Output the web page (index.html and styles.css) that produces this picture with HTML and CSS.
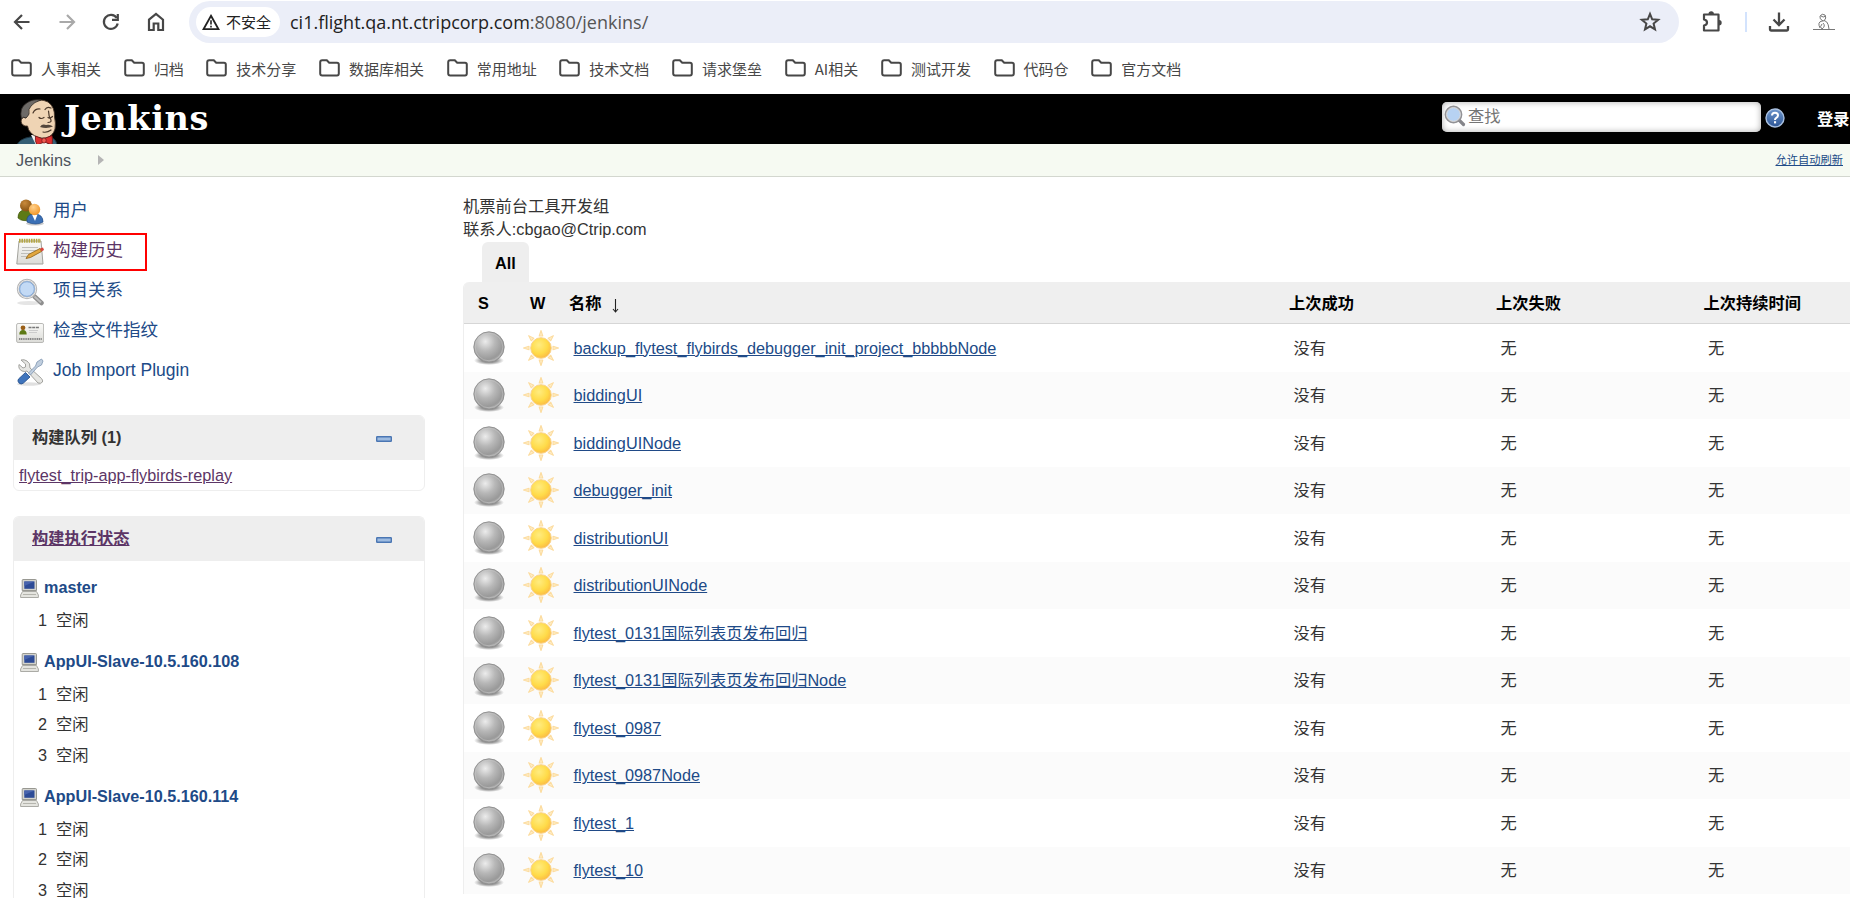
FILE: index.html
```html
<!DOCTYPE html>
<html lang="zh-CN">
<head>
<meta charset="utf-8">
<title>Jenkins</title>
<link rel="stylesheet" href="styles.css">
</head>
<body>
<svg class="defs" width="0" height="0">
  <defs>
    <radialGradient id="gBall" cx="0.38" cy="0.32" r="0.7"><stop offset="0" stop-color="#ececec"/><stop offset="0.45" stop-color="#b8b8b8"/><stop offset="0.85" stop-color="#999"/><stop offset="1" stop-color="#adadad"/></radialGradient>
    <radialGradient id="gShade"><stop offset="0.5" stop-color="#000" stop-opacity=".4"/><stop offset="1" stop-color="#000" stop-opacity="0"/></radialGradient>
    <radialGradient id="gSun" cx="0.4" cy="0.35" r="0.7"><stop offset="0" stop-color="#ffec80"/><stop offset="0.6" stop-color="#ffdb49"/><stop offset="1" stop-color="#fbb743"/></radialGradient>
    <radialGradient id="gHeadB" cx="0.4" cy="0.3" r="0.8"><stop offset="0" stop-color="#c98a3c"/><stop offset="1" stop-color="#7d4a0c"/></radialGradient>
    <radialGradient id="gHeadO" cx="0.4" cy="0.3" r="0.8"><stop offset="0" stop-color="#ffd08a"/><stop offset="1" stop-color="#ef8f1c"/></radialGradient>
    <linearGradient id="gPaper" x1="0" y1="0" x2="0" y2="1"><stop offset="0" stop-color="#fafaf8"/><stop offset="1" stop-color="#dcdcd8"/></linearGradient>
    <linearGradient id="gHelp" x1="0" y1="0" x2="0" y2="1"><stop offset="0" stop-color="#6d95cb"/><stop offset="1" stop-color="#2c5596"/></linearGradient>
    <symbol id="folder" viewBox="0 0 21 18"><path d="M1.2 3.2Q1.2 1.2 3.2 1.2H7.8L10.2 3.8H18Q19.8 3.8 19.8 5.6V14.6Q19.8 16.5 18 16.5H3.2Q1.2 16.5 1.2 14.6Z" fill="none" stroke="#474747" stroke-width="2"/></symbol>
    <symbol id="ball" viewBox="0 0 34 36"><ellipse cx="17" cy="30.500" rx="15" ry="4.500" fill="url(#gShade)"/><circle cx="17" cy="17" r="15.200" fill="url(#gBall)" stroke="#8d8d8d" stroke-width=".9"/><circle cx="17" cy="17" r="13.800" fill="none" stroke="#ccc" stroke-opacity=".5" stroke-width=".9"/></symbol>
    <symbol id="sun" viewBox="0 0 38 38">
      <g fill="#ffedc4" stroke="#fcdca0" stroke-width="1.100" stroke-linejoin="round">
        <path id="ray" d="M17.200 7L19 1.500L20.800 7Z"/>
        <use href="#ray" transform="rotate(45 19 19)"/><use href="#ray" transform="rotate(90 19 19)"/><use href="#ray" transform="rotate(135 19 19)"/><use href="#ray" transform="rotate(180 19 19)"/><use href="#ray" transform="rotate(225 19 19)"/><use href="#ray" transform="rotate(270 19 19)"/><use href="#ray" transform="rotate(315 19 19)"/>
      </g>
      <circle cx="19" cy="19" r="10.300" fill="url(#gSun)" stroke="#fad38a" stroke-width="1"/></symbol>
    <symbol id="pc" viewBox="0 0 19 19"><path d="M3 .5H15.500Q16.500.5 16.500 1.500V11.500H2.200V1.500Q2.200.5 3 .5Z" fill="#d3d3cd" stroke="#8e8e88" stroke-width=".9"/><rect x="4.300" y="2.500" width="10.200" height="7.300" fill="#2d4b96"/><path d="M4.300 2.500H14.500L4.300 7Z" fill="#4763ad"/><path d="M2.500 12.500H16.500L18.400 16V18.500H.6V16Z" fill="#e4e4df" stroke="#a3a39d" stroke-width=".9"/><path d="M3 15.500H16" stroke="#b5b5ae"/></symbol>
    <symbol id="minus" viewBox="0 0 16 6"><rect x=".7" y=".7" width="14.600" height="4.600" rx=".5" fill="#9dbbe0" stroke="#4a76b3" stroke-width="1.400"/></symbol>
  </defs>
</svg>

<header class="chrome">
  <div class="toolbar">
    <div class="nav">
      <svg width="22" height="22" viewBox="0 0 22 22"><path d="M18.500 11H4.500M11 4L4 11L11 18" fill="none" stroke="#474747" stroke-width="2.200"/></svg>
      <svg width="22" height="22" viewBox="0 0 22 22"><path d="M3.500 11H17.500M11 4L18 11L11 18" fill="none" stroke="#a9a9a9" stroke-width="2.200"/></svg>
      <svg width="22" height="22" viewBox="0 0 22 22"><path d="M16.700 7A7 7 0 1 0 17.700 12.500" fill="none" stroke="#474747" stroke-width="2.200"/><path d="M17.800 3V8.800H12" fill="none" stroke="#474747" stroke-width="2.200"/></svg>
      <svg width="22" height="22" viewBox="0 0 22 22"><path d="M4 8.700L11 3L18 8.700V19H13.300V12.500H8.700V19H4Z" fill="none" stroke="#474747" stroke-width="2.200"/></svg>
    </div>
    <div class="omnibox">
      <div class="chip">
        <svg width="18" height="17" viewBox="0 0 18 17"><path d="M9 1.800L16.500 15.200H1.500Z" fill="none" stroke="#222" stroke-width="1.800"/><path d="M9 6.300V10.600M9 11.800V13.500" stroke="#222" stroke-width="1.600"/></svg>
        <span>不安全</span>
      </div>
      <div class="url"><span class="host">ci1.flight.qa.nt.ctripcorp.com</span>:8080/jenkins/</div>
      <svg class="star" width="22" height="22" viewBox="0 0 22 22"><path d="M11 2.900L13.200 8.300L19.200 8.800L14.600 12.600L16 18.400L11 15.300L6 18.400L7.400 12.600L2.800 8.800L8.800 8.300Z" fill="none" stroke="#474747" stroke-width="2"/></svg>
    </div>
    <div class="actions">
      <svg class="ext" width="22" height="22" viewBox="0 0 22 22"><path d="M3 3.500H17.500V19.500H3V14.500Q6 14 6 11.500Q6 9 3 8.500Z" fill="none" stroke="#474747" stroke-width="2.200" stroke-linejoin="round"/><path d="M7.500 3A2.700 2.700 0 0 1 12.900 3ZM18 9A2.700 2.700 0 0 1 18 14.400Z" fill="#474747"/></svg>
      <span class="sep"></span>
      <svg class="dl" width="22" height="22" viewBox="0 0 22 22"><path d="M11 1.500V13.500M5.500 8.500L11 14L16.500 8.500M2 15V18.500Q2 19.500 3 19.500H19Q20 19.500 20 18.500V15" fill="none" stroke="#474747" stroke-width="2.300"/></svg>
      <svg class="ava" width="22" height="18" viewBox="0 0 22 18"><path d="M0 16.500H22M7 15Q4 9 9 8Q15 6 16 16M10 8Q6 6 7 3Q9 0 12 2Q14 5 11 8M8 3Q10 5 13 3M10 10Q13 13 9 16Q6 14 9 11" fill="none" stroke="#777" stroke-width="1"/></svg>
    </div>
  </div>
  <nav class="bookmarks">
    <span><svg width="21" height="18"><use href="#folder"/></svg>人事相关</span>
    <span><svg width="21" height="18"><use href="#folder"/></svg>归档</span>
    <span><svg width="21" height="18"><use href="#folder"/></svg>技术分享</span>
    <span><svg width="21" height="18"><use href="#folder"/></svg>数据库相关</span>
    <span><svg width="21" height="18"><use href="#folder"/></svg>常用地址</span>
    <span><svg width="21" height="18"><use href="#folder"/></svg>技术文档</span>
    <span><svg width="21" height="18"><use href="#folder"/></svg>请求堡垒</span>
    <span><svg width="21" height="18"><use href="#folder"/></svg>AI相关</span>
    <span><svg width="21" height="18"><use href="#folder"/></svg>测试开发</span>
    <span><svg width="21" height="18"><use href="#folder"/></svg>代码仓</span>
    <span><svg width="21" height="18"><use href="#folder"/></svg>官方文档</span>
  </nav>
</header>

<div class="topbar">
  <svg class="butler" width="42" height="46" viewBox="0 0 42 46">
    <path d="M0 46Q2 40 13 38L32 38Q39 39 40 46Z" fill="#355e75" stroke="#1c3340"/>
    <path d="M14 36L19 46H30L32 37Z" fill="#f4f4f4"/>
    <path d="M8 27Q3 25 4.500 20Q6 17 9 19Q7 8 15 3Q23-1 31 3Q38 8 37.500 18Q39 24 38 30Q36 37 29 39Q20 40 14 34Q11 31 10.500 27Z" fill="#efd4b4" stroke="#4a382a" stroke-width=".9"/>
    <path d="M4.500 20Q2 9 9 4.500Q15-.5 24 1Q17 3 14 7Q11 10 12 15Q11 17 9 19Q6 17 4.500 20Z" fill="#6d6a67" stroke="#2b2622" stroke-width=".8"/>
    <path d="M16 14Q18 9.500 23 10M28 10.500Q30 7 34 9M22 18.500Q24 20.500 27 18.500M31 18.500Q33 20 35.500 17.500M31.500 12Q31.500 17 34 21Q34.500 23.500 31 23.500M26 33Q30 34 34 31" fill="none" stroke="#4a382a" stroke-width="1.200" stroke-linecap="round"/>
    <path d="M23 28Q25 24.500 29 26Q33 25 36 27.500Q30 30 23 28Z" fill="#54473c"/>
    <path d="M18.500 37L26 40L35 36.500Q36 41 35 46L27.500 43L20 46Q17.500 42 18.500 37Z" fill="#dc2f2f" stroke="#681414" stroke-width=".8"/><ellipse cx="27" cy="41.500" rx="2.200" ry="2.600" fill="#ef5b52" stroke="#681414" stroke-width=".7"/>
  </svg>
  <span class="brand">Jenkins</span>
  <div class="search">
    <svg width="22" height="22" viewBox="0 0 22 22"><path d="M15 15L19.500 19.500" stroke="#85858a" stroke-width="3.200" stroke-linecap="round"/><circle cx="9.500" cy="9.500" r="7.800" fill="#b7d2f2" stroke="#929296" stroke-width="2.200"/><circle cx="9.500" cy="9.500" r="6.900" fill="none" stroke="#e3e3e3" stroke-width="1"/></svg>
    <span>查找</span>
  </div>
  <svg class="help" width="20" height="20" viewBox="0 0 20 20"><circle cx="10" cy="10" r="9" fill="url(#gHelp)" stroke="#a9c0e0" stroke-width="1.400"/><path d="M7 7.600Q7 4.800 10 4.800Q13 4.800 13 7.300Q13 8.800 11.300 9.800Q10 10.600 10 12" fill="none" stroke="#fff" stroke-width="2"/><rect x="9" y="13.200" width="2.100" height="2.200" fill="#fff"/></svg>
  <span class="login">登录</span>
</div>

<div class="crumbs">
  <span>Jenkins</span><i class="tri"></i>
  <a class="refresh">允许自动刷新</a>
</div>

<div class="body">
  <aside class="side">
    <ul class="tasks">
      <li><svg width="28" height="28" viewBox="0 0 28 28"><path d="M2 20Q2 12 9 12Q16 12 16 18L14 22Q6 24 2 20Z" fill="#5d7a15" stroke="#3f560c" stroke-width=".7"/><circle cx="10" cy="7.500" r="6" fill="url(#gHeadB)"/><ellipse cx="19" cy="25.500" rx="9" ry="2" fill="#000" opacity=".2"/><path d="M11 24Q10 16 18.500 16Q27 16 27 24Q20 28 11 24Z" fill="#3a6fb5" stroke="#204a87" stroke-width=".7"/><path d="M16 16.500H21.500L19 23Z" fill="#fff"/><circle cx="18.500" cy="11.500" r="5.700" fill="url(#gHeadO)"/></svg><a>用户</a></li>
      <li class="boxed"><svg width="28" height="28" viewBox="0 0 28 28"><path d="M3 3H25L27 26H.8Z" fill="url(#gPaper)" stroke="#a2a29c"/><path d="M3 2.800H25" stroke="#b3a544" stroke-width="4" stroke-dasharray="1.600 .8"/><path d="M6 9.500H22M6 12.500H20M5 15.500H14M5 18.500H12" stroke="#b9b9b5" stroke-width=".9"/><path d="M10 20.500L12.500 16.500L24 10.500L25.500 13.500L14.500 19.500Z" fill="#e2a73f" stroke="#8c5f15" stroke-width=".8"/><path d="M24 10.500L27 9.500L28 12L25.500 13.500Z" fill="#d8443c"/></svg><a class="visited">构建历史</a></li>
      <li><svg width="28" height="28" viewBox="0 0 28 28"><ellipse cx="13" cy="25" rx="12" ry="2" fill="#000" opacity=".1"/><path d="M18.500 18.500L25.500 25" stroke="#8e8e8e" stroke-width="4.500" stroke-linecap="round"/><path d="M18.500 18.500L25 24.500" stroke="#bdbdbd" stroke-width="2"/><circle cx="11" cy="11" r="9" fill="#c3daf5" stroke="#b3b3b3" stroke-width="2.400"/><circle cx="11" cy="11" r="8.800" fill="none" stroke="#e8e8e8" stroke-width="1"/><circle cx="11" cy="11" r="7.300" fill="none" stroke="#7ba1d4" stroke-width=".9"/></svg><a>项目关系</a></li>
      <li><svg width="28" height="28" viewBox="0 0 28 28"><rect x=".6" y="5.500" width="27" height="19" rx="1.500" fill="url(#gPaper)" stroke="#b9b9b6"/><circle cx="7" cy="9.800" r="2.400" fill="#9a5f17"/><path d="M3.300 16.500Q3.300 12 7 12Q10.700 12 10.700 16.500Z" fill="#5d7a15"/><path d="M12.500 9.500H23" stroke="#777" stroke-width="1.400" stroke-dasharray="3 .7"/><path d="M13 12.500H22M13 14.500H21" stroke="#ccc"/><path d="M3 21H26" stroke="#888" stroke-width="2" stroke-dasharray="1.200 .6"/></svg><a>检查文件指纹</a></li>
      <li><svg width="28" height="28" viewBox="0 0 28 28"><ellipse cx="13" cy="26" rx="12" ry="1.700" fill="#000" opacity=".12"/><path d="M5 2L9.500 6V9L7 10L3 6.500Q2 11 6 13Q9 14 11 13L22 25Q25 26 26.500 24Q27 22 25.500 20.500L14 10Q14.500 5 11 3Q8 1 5 2Z" fill="#e6e6e3" stroke="#989894" stroke-width=".9"/><path d="M25.500 1L27 3L25.500 7L21.500 9L14.500 17L12.500 15L19.500 8L21 4Z" fill="#c0cede" stroke="#7d94b0" stroke-width=".8"/><path d="M3 25Q1 23 2.500 21L9.500 14.500L14 19L7.500 25Q5 27 3 25Z" fill="#3f74bc" stroke="#204a87" stroke-width=".8"/></svg><a class="latin">Job Import Plugin</a></li>
    </ul>

    <section class="pane">
      <h2>构建队列 (1)<svg width="16" height="6"><use href="#minus"/></svg></h2>
      <a class="queue">flytest_trip-app-flybirds-replay</a>
    </section>

    <section class="pane execs">
      <h2><a>构建执行状态</a><svg width="16" height="6"><use href="#minus"/></svg></h2>
      <div class="node"><h3><svg width="19" height="19"><use href="#pc"/></svg>master</h3><p><b>1</b>空闲</p></div>
      <div class="node"><h3><svg width="19" height="19"><use href="#pc"/></svg>AppUI-Slave-10.5.160.108</h3><p><b>1</b>空闲</p><p><b>2</b>空闲</p><p><b>3</b>空闲</p></div>
      <div class="node"><h3><svg width="19" height="19"><use href="#pc"/></svg>AppUI-Slave-10.5.160.114</h3><p><b>1</b>空闲</p><p><b>2</b>空闲</p><p><b>3</b>空闲</p></div>
    </section>
  </aside>

  <main class="main">
    <div class="desc">机票前台工具开发组<br>联系人:cbgao@Ctrip.com</div>
    <div class="tab">All</div>
    <div class="jobs">
      <div class="row head"><span>S</span><span>W</span><span>名称<svg class="arrow" width="7" height="14" viewBox="0 0 7 14"><path d="M3.500 0V13M1 10L3.500 13L6 10" fill="none" stroke="#222" stroke-width="1.100"/></svg></span><span>上次成功</span><span>上次失败</span><span>上次持续时间</span></div>
      <div class="row"><svg width="34" height="36"><use href="#ball"/></svg><svg width="38" height="38"><use href="#sun"/></svg><a>backup_flytest_flybirds_debugger_init_project_bbbbbNode</a><span>没有</span><span>无</span><span>无</span></div>
      <div class="row"><svg width="34" height="36"><use href="#ball"/></svg><svg width="38" height="38"><use href="#sun"/></svg><a>biddingUI</a><span>没有</span><span>无</span><span>无</span></div>
      <div class="row"><svg width="34" height="36"><use href="#ball"/></svg><svg width="38" height="38"><use href="#sun"/></svg><a>biddingUINode</a><span>没有</span><span>无</span><span>无</span></div>
      <div class="row"><svg width="34" height="36"><use href="#ball"/></svg><svg width="38" height="38"><use href="#sun"/></svg><a>debugger_init</a><span>没有</span><span>无</span><span>无</span></div>
      <div class="row"><svg width="34" height="36"><use href="#ball"/></svg><svg width="38" height="38"><use href="#sun"/></svg><a>distributionUI</a><span>没有</span><span>无</span><span>无</span></div>
      <div class="row"><svg width="34" height="36"><use href="#ball"/></svg><svg width="38" height="38"><use href="#sun"/></svg><a>distributionUINode</a><span>没有</span><span>无</span><span>无</span></div>
      <div class="row"><svg width="34" height="36"><use href="#ball"/></svg><svg width="38" height="38"><use href="#sun"/></svg><a>flytest_0131国际列表页发布回归</a><span>没有</span><span>无</span><span>无</span></div>
      <div class="row"><svg width="34" height="36"><use href="#ball"/></svg><svg width="38" height="38"><use href="#sun"/></svg><a>flytest_0131国际列表页发布回归Node</a><span>没有</span><span>无</span><span>无</span></div>
      <div class="row"><svg width="34" height="36"><use href="#ball"/></svg><svg width="38" height="38"><use href="#sun"/></svg><a>flytest_0987</a><span>没有</span><span>无</span><span>无</span></div>
      <div class="row"><svg width="34" height="36"><use href="#ball"/></svg><svg width="38" height="38"><use href="#sun"/></svg><a>flytest_0987Node</a><span>没有</span><span>无</span><span>无</span></div>
      <div class="row"><svg width="34" height="36"><use href="#ball"/></svg><svg width="38" height="38"><use href="#sun"/></svg><a>flytest_1</a><span>没有</span><span>无</span><span>无</span></div>
      <div class="row"><svg width="34" height="36"><use href="#ball"/></svg><svg width="38" height="38"><use href="#sun"/></svg><a>flytest_10</a><span>没有</span><span>无</span><span>无</span></div>
    </div>
  </main>
</div>
</body>
</html>
```
FILE: styles.css
```css
* { box-sizing: border-box; margin: 0; padding: 0; }
html, body { height: 898px; overflow: hidden; }
body {
  width: 1850px;
  background: #fff;
  color: #333;
  font: 16.25px/20px "Liberation Sans", "Noto Sans CJK SC", sans-serif;
  display: flex;
  flex-direction: column;
}
svg { display: block; flex: none; }
.defs { position: absolute; }

/* browser chrome */
.chrome { height: 94px; flex: none; }
.toolbar { display: flex; align-items: center; height: 43px; padding-left: 11px; }
.nav { display: flex; gap: 22.5px; width: 178px; }
.omnibox { display: flex; align-items: center; width: 1490px; height: 42px; margin-top: 1px; border-radius: 21px; background: #ebeef8; padding: 0 18px 0 7px; }
.chip { display: flex; align-items: center; gap: 6px; width: 84px; height: 30px; padding-left: 6px; border-radius: 15px; background: #fff; color: #222; font: 15px/30px "Noto Sans CJK SC", sans-serif; white-space: nowrap; }
.url { margin-left: 10px; font: 18px/30px "Open Sans", sans-serif; color: #555; white-space: nowrap; }
.host { color: #222; }
.star { margin-left: auto; }
.actions { display: flex; align-items: center; padding-left: 22px; }
.sep { width: 2px; height: 20px; margin: 0 21px 0 22px; background: #d3e3fd; }
.ava { margin-left: 23px; }
.bookmarks { display: flex; height: 50px; align-items: center; gap: 22.660px; padding: 2px 0 0 11px; color: #474747; font: 15px/20px "Noto Sans CJK SC", sans-serif; }
.bookmarks span { display: flex; align-items: center; gap: 9px; white-space: nowrap; }
.bookmarks svg { margin-top: -2px; }

/* Jenkins header */
.topbar { display: flex; flex: none; height: 50px; background: #000; padding-left: 17px; overflow: hidden; }
.butler { margin-top: 5px; }
.brand { margin-left: 5px; width: 200px; color: #fff; font: bold 33.5px/49px "DejaVu Serif", serif; letter-spacing: .6px; }
.search { display: flex; align-items: center; width: 319px; height: 30px; margin: 8px 0 0 1178px; padding: 0 0 2px 2px; border-radius: 5px; background: #fff; box-shadow: inset 0 0 6px #aaa; color: #757575; gap: 2px; }
.help { margin: 14px 0 0 4px; }
.login { margin: 15px 0 0 32px; color: #fff; font-weight: bold; white-space: nowrap; }
.crumbs { display: flex; flex: none; align-items: center; height: 33px; padding: 0 7px 0 16px; background: #f6faf2; border-bottom: 1px solid #d3d7cf; color: #4d545d; }
.tri { margin-left: 27px; border: 5px solid transparent; border-left: 6px solid #b5b5b5; border-right: 0; }
.refresh { margin-left: auto; color: #204a87; font-size: 11.250px; text-decoration: underline; }

.body { display: flex; height: 721px; overflow: hidden; }

/* sidebar */
.side { width: 463px; padding-top: 14px; }
.tasks { list-style: none; height: 224px; padding-top: 1.5px; }
.tasks li { display: flex; align-items: center; gap: 9px; width: 143px; height: 38px; margin: 0 0 2px 4px; padding-left: 12px; white-space: nowrap; }
.tasks a { color: #204a87; font-size: 17.500px; line-height: 24px; padding-bottom: 3px; }
.tasks .visited { color: #5c3566; }
.tasks .boxed { outline: 2px solid #f00; outline-offset: -2px; }
.pane { width: 412px; margin: 0 0 25px 13px; border: 1px solid #eee; border-radius: 6px; }
.pane h2 { display: flex; align-items: center; justify-content: space-between; height: 44px; padding: 0 32px 2px 18px; background: #eee; border-radius: 5px 5px 0 0; font-size: 16.250px; }
.pane h2 svg { margin-top: 4px; }
.pane h2 a { color: #5c3566; text-decoration: underline; }
.queue { display: block; height: 30px; padding-left: 5px; line-height: 30px; color: #5c3566; text-decoration: underline; }
.execs { height: 382px; margin-bottom: 0; border-bottom: 0; border-radius: 6px 6px 0 0; }
.execs h2 { margin-bottom: 8px; }
.node { height: 135px; padding-left: 6px; }
.node:nth-of-type(1) { height: 74px; }
.node h3 { display: flex; align-items: center; gap: 5px; height: 36px; color: #204a87; font-size: 16.200px; }
.node h3 svg { margin-top: 2px; }
.node p { display: flex; gap: 9px; height: 30.300px; padding-left: 18px; line-height: 30px; }
.node b { font-weight: normal; }

/* job list */
.main { flex: 1; }
.desc { padding-top: 18px; height: 65px; line-height: 23px; }
.tab { width: 47px; height: 40px; margin-left: 19px; border-radius: 6px 6px 0 0; background: #eee; color: #000; font-weight: bold; line-height: 43px; text-align: center; }
.jobs { border-left: 1px solid #eee; border-radius: 6px 0 0 0; overflow: hidden; }
.row { display: grid; grid-template-columns: 59px 50.5px 720px 207px 207.500px 141px; align-items: center; height: 47.500px; }
.row:nth-child(odd) { background: #fbfbfb; }
.row.head { height: 42px; background: #efefef; border-bottom: 1px solid #d6d6d6; color: #000; font-weight: bold; }
.row > svg:first-child { margin-left: 8px; }
.row > svg + svg { margin-left: -1px; }
.row a { color: #204a87; text-decoration: underline; }
.row a, .row > span { white-space: nowrap; }
.head span:nth-child(1) { padding-left: 14px; }
.head span:nth-child(2) { padding-left: 7px; }
.head span:nth-child(n+3) { margin-left: -4.5px; }
.arrow { display: inline-block; margin-left: 10px; vertical-align: -4px; }
```
